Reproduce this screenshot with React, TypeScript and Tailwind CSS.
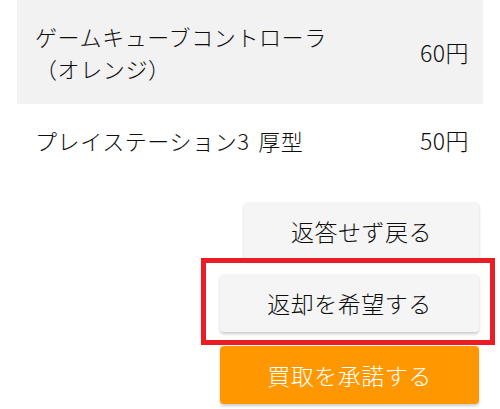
import React from "react";

const items = [
  { name: "ゲームキューブコントローラ（オレンジ）", price: "60円", shaded: true },
  { name: "プレイステーション3 厚型", price: "50円", shaded: false },
];

const App = () => {
  return (
    <div className="w-[500px] h-[409px] bg-white overflow-hidden font-['Noto_Sans_CJK_JP',sans-serif] font-light text-[#0d0d0d]">
      <div className="mx-[17px]">
        {items.map((item, index) => (
          <div
            key={index}
            className={`flex items-center justify-between px-[18px] py-[20px] ${
              item.shaded ? "bg-[#f2f2f2]" : ""
            }`}
          >
            <div className="w-[310px] text-[22px] leading-[32px] tracking-[0.6px] [word-spacing:3px]">{item.name}</div>
            <div className="text-[23px] leading-[32px] tracking-[0.5px] -mr-[4px]">{item.price}</div>
          </div>
        ))}
      </div>

      <div className="flex flex-col items-end gap-[14px] pr-[21px] mt-[26px]">
        <button className="w-[235px] h-[58px] rounded bg-[#f5f5f5] text-[23px] tracking-[0.5px] shadow-[0_2px_3px_rgba(0,0,0,0.2)]">
          返答せず戻る
        </button>
        <div className="relative">
          <button className="w-[259px] h-[58px] rounded bg-[#f5f5f5] text-[23px] tracking-[0.5px] shadow-[0_2px_3px_rgba(0,0,0,0.2)]">
            返却を希望する
          </button>
          <div className="absolute -left-[19px] -top-[16px] -right-[16px] -bottom-[13px] border-[5px] border-[#ec1c24] pointer-events-none" />
        </div>
        <button className="w-[259px] h-[58px] rounded bg-[#ff9800] text-white text-[23px] tracking-[0.5px] shadow-[0_2px_3px_rgba(0,0,0,0.2)]">
          買取を承諾する
        </button>
      </div>
    </div>
  );
};

export default App;
